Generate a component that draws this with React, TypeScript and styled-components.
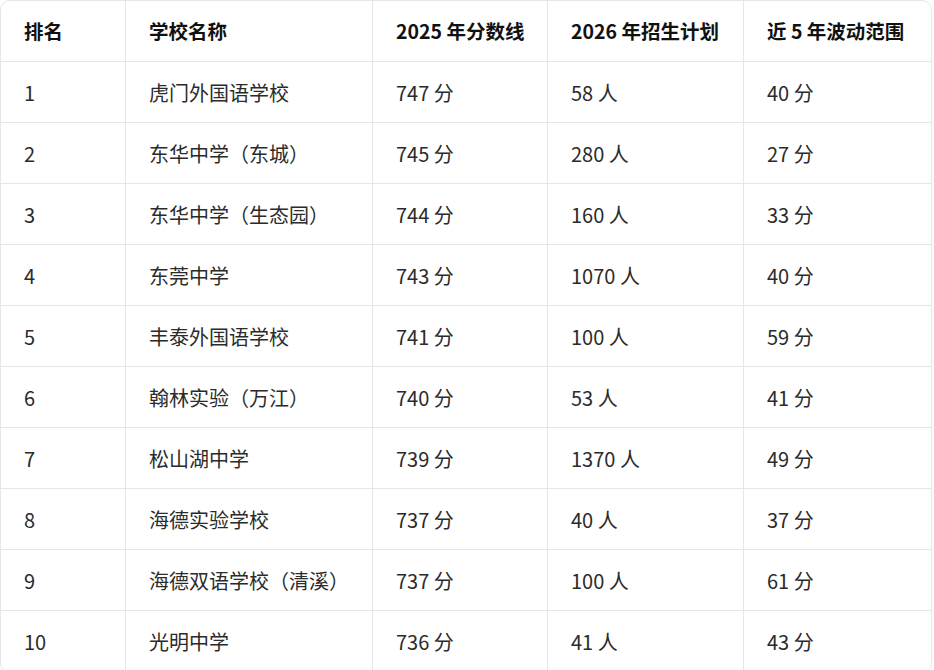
import React from 'react';
import styled, { createGlobalStyle } from 'styled-components';

const GlobalStyle = createGlobalStyle`
  html, body {
    margin: 0;
    padding: 0;
    background: #ffffff;
  }
  body {
    font-family: "Noto Sans CJK SC", "Noto Sans", sans-serif;
  }
`;

const TableWrap = styled.div`
  width: 930px;
  border: 1px solid #e6e6e6;
  border-radius: 10px;
  overflow: hidden;
  box-sizing: content-box;
`;

const Table = styled.table`
  width: 100%;
  border-collapse: separate;
  border-spacing: 0;
  table-layout: fixed;
`;

const HeadCell = styled.th<{ $w: number }>`
  width: ${(p) => p.$w}px;
  height: 61px;
  padding: 0 0 1px 23px;
  text-align: left;
  font-size: 19.5px;
  font-weight: 700;
  color: #111111;
  border-bottom: 1px solid #e6e6e6;
  border-right: 1px solid #e6e6e6;
  box-sizing: border-box;
  &:last-child {
    border-right: none;
  }
`;

const Row = styled.tr`
  &:last-child td {
    border-bottom: none;
  }
`;

const Cell = styled.td`
  height: 61px;
  padding: 0 0 0 23px;
  font-size: 20px;
  font-weight: 400;
  color: #2b2b2b;
  border-bottom: 1px solid #e6e6e6;
  border-right: 1px solid #e6e6e6;
  box-sizing: border-box;
  white-space: nowrap;
  &:last-child {
    border-right: none;
  }
`;

const columns = [
  { title: '排名', w: 125 },
  { title: '学校名称', w: 247 },
  { title: '2025 年分数线', w: 175 },
  { title: '2026 年招生计划', w: 196 },
  { title: '近 5 年波动范围', w: 187 },
];

const rows = [
  ['1', '虎门外国语学校', '747 分', '58 人', '40 分'],
  ['2', '东华中学（东城）', '745 分', '280 人', '27 分'],
  ['3', '东华中学（生态园）', '744 分', '160 人', '33 分'],
  ['4', '东莞中学', '743 分', '1070 人', '40 分'],
  ['5', '丰泰外国语学校', '741 分', '100 人', '59 分'],
  ['6', '翰林实验（万江）', '740 分', '53 人', '41 分'],
  ['7', '松山湖中学', '739 分', '1370 人', '49 分'],
  ['8', '海德实验学校', '737 分', '40 人', '37 分'],
  ['9', '海德双语学校（清溪）', '737 分', '100 人', '61 分'],
  ['10', '光明中学', '736 分', '41 人', '43 分'],
];

const App = () => {
  return (
    <>
      <GlobalStyle />
      <TableWrap>
        <Table>
          <thead>
            <tr>
              {columns.map((c) => (
                <HeadCell key={c.title} $w={c.w}>
                  {c.title}
                </HeadCell>
              ))}
            </tr>
          </thead>
          <tbody>
            {rows.map((r) => (
              <Row key={r[0]}>
                {r.map((v, i) => (
                  <Cell key={i}>{v}</Cell>
                ))}
              </Row>
            ))}
          </tbody>
        </Table>
      </TableWrap>
    </>
  );
};

export default App;
